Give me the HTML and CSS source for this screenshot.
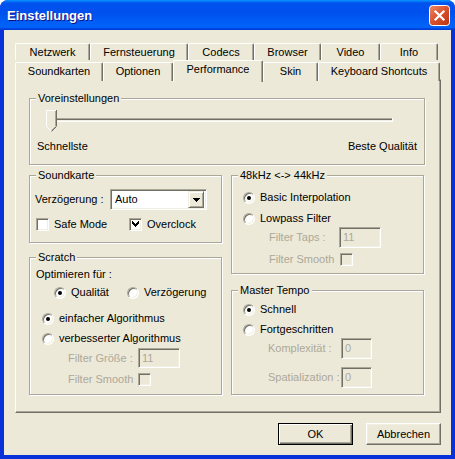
FILE: index.html
```html
<!DOCTYPE html>
<html lang="de">
<head>
    <meta charset="UTF-8">
    <title>Einstellungen</title>
    <link rel="stylesheet" href="styles.css">
</head>
<body>
    <div class="window">
        <div class="titlebar">
            <span class="title">Einstellungen</span>
            <button class="close" title="Schließen">
                <svg width="21" height="21" viewBox="0 0 21 21">
                    <defs>
                        <linearGradient id="close-bg" x1="0" y1="0" x2="1" y2="1">
                            <stop offset="0" stop-color="#ea8a6a"/>
                            <stop offset="0.5" stop-color="#d9512c"/>
                            <stop offset="1" stop-color="#b9330f"/>
                        </linearGradient>
                    </defs>
                    <rect x="0.5" y="0.5" width="20" height="20" rx="3" fill="url(#close-bg)" stroke="#fff"/>
                    <path d="M6.5 6.5L14.5 14.5M14.5 6.5L6.5 14.5" stroke="#fff" stroke-width="2.2" stroke-linecap="square"/>
                </svg>
            </button>
        </div>

        <div class="client">
            <div class="tabs">
                <div class="tab-row back">
                    <div class="tab">Netzwerk</div>
                    <div class="tab">Fernsteuerung</div>
                    <div class="tab">Codecs</div>
                    <div class="tab">Browser</div>
                    <div class="tab">Video</div>
                    <div class="tab">Info</div>
                </div>
                <div class="tab-row front">
                    <div class="tab">Soundkarten</div>
                    <div class="tab">Optionen</div>
                    <div class="tab selected">Performance</div>
                    <div class="tab">Skin</div>
                    <div class="tab">Keyboard Shortcuts</div>
                </div>
            </div>

            <div class="panel">
                <div class="group presets">
                    <div class="group-title">Voreinstellungen</div>
                    <svg class="slider" width="350" height="23" viewBox="0 0 350 23" shape-rendering="crispEdges">
                        <!-- channel -->
                        <rect x="4" y="8" width="344" height="1" fill="#aca899"/>
                        <rect x="5" y="9" width="342" height="1" fill="#716f64"/>
                        <rect x="5" y="10" width="342" height="1" fill="#f1efe2"/>
                        <rect x="4" y="11" width="344" height="1" fill="#fff"/>
                        <rect x="4" y="8" width="1" height="4" fill="#aca899"/>
                        <rect x="347" y="8" width="1" height="4" fill="#fff"/>
                        <!-- thumb -->
                        <polygon points="1,0 12,0 12,16 7,22 6,22 1,16" fill="#ece9d8" shape-rendering="auto"/>
                        <path d="M1.5 16V0.5H11" stroke="#fff" fill="none"/>
                        <path d="M1.5 16.5L6.5 21.5" stroke="#fff" fill="none" shape-rendering="auto"/>
                        <path d="M10.5 1V16" stroke="#aca899" fill="none"/>
                        <path d="M10.5 16.5L6.5 20.5" stroke="#aca899" fill="none" shape-rendering="auto"/>
                        <path d="M11.5 0V16" stroke="#716f64" fill="none"/>
                        <path d="M11.5 16.5L6.5 21.5" stroke="#716f64" fill="none" shape-rendering="auto"/>
                    </svg>
                    <div class="slider-labels">
                        <span>Schnellste</span>
                        <span>Beste Qualität</span>
                    </div>
                </div>

                <div class="columns">
                    <div class="col">
                        <div class="group soundcard">
                            <div class="group-title">Soundkarte</div>
                            <div class="row latency">
                                <span class="latency-label">Verzögerung :</span>
                                <div class="combo">
                                    <span class="combo-value">Auto</span>
                                    <span class="combo-button">
                                        <svg width="7" height="4" viewBox="0 0 7 4" shape-rendering="crispEdges">
                                            <path d="M0 0h7v1H0zM1 1h5v1H1zM2 2h3v1H2zM3 3h1v1H3z" fill="#000"/>
                                        </svg>
                                    </span>
                                </div>
                            </div>
                            <div class="row checks">
                                <label class="check safe-mode"><span class="box"></span>Safe Mode</label>
                                <label class="check"><span class="box checked">
                                    <svg width="7" height="7" viewBox="0 0 7 7" shape-rendering="crispEdges">
                                        <path d="M6 0h1v3H6zM5 1h1v3H5zM4 2h1v3H4zM3 3h1v3H3zM2 2h1v3H2zM1 1h1v3H1zM0 0h1v3H0z" fill="#000" transform="translate(0 0)"/>
                                    </svg>
                                </span>Overclock</label>
                            </div>
                        </div>

                        <div class="group scratch">
                            <div class="group-title">Scratch</div>
                            <div class="row optimize-label">Optimieren für :</div>
                            <div class="row optimize">
                                <label class="radio quality"><span class="dot on"></span>Qualität</label>
                                <label class="radio"><span class="dot"></span>Verzögerung</label>
                            </div>
                            <div class="row algo simple"><label class="radio"><span class="dot on"></span>einfacher Algorithmus</label></div>
                            <div class="row algo improved"><label class="radio"><span class="dot"></span>verbesserter Algorithmus</label></div>
                            <div class="row sub filter-size">
                                <span class="sub-label">Filter Größe :</span>
                                <span class="field wide">11</span>
                            </div>
                            <div class="row sub filter-smooth">
                                <span class="sub-label">Filter Smooth</span>
                                <span class="box disabled"></span>
                            </div>
                        </div>
                    </div>

                    <div class="col right">
                        <div class="group resample">
                            <div class="group-title">48kHz &lt;-&gt; 44kHz</div>
                            <div class="row opt first"><label class="radio"><span class="dot on"></span>Basic Interpolation</label></div>
                            <div class="row opt second"><label class="radio"><span class="dot"></span>Lowpass Filter</label></div>
                            <div class="row sub taps">
                                <span class="sub-label">Filter Taps :</span>
                                <span class="field wide">11</span>
                            </div>
                            <div class="row sub smooth">
                                <span class="sub-label">Filter Smooth</span>
                                <span class="box disabled"></span>
                            </div>
                        </div>

                        <div class="group tempo">
                            <div class="group-title">Master Tempo</div>
                            <div class="row opt first"><label class="radio"><span class="dot on"></span>Schnell</label></div>
                            <div class="row opt second"><label class="radio"><span class="dot"></span>Fortgeschritten</label></div>
                            <div class="row sub complexity">
                                <span class="sub-label">Komplexität :</span>
                                <span class="field narrow">0</span>
                            </div>
                            <div class="row sub spatial">
                                <span class="sub-label">Spatialization :</span>
                                <span class="field narrow">0</span>
                            </div>
                        </div>
                    </div>
                </div>
            </div>

            <div class="buttons">
                <button class="btn default">OK</button>
                <button class="btn">Abbrechen</button>
            </div>
        </div>
    </div>
</body>
</html>
```

FILE: styles.css
```css
* {
    box-sizing: border-box;
}
body {
    margin: 0;
    background: #fff;
    font-family: "Liberation Sans", Arial, sans-serif;
    font-size: 11px;
    line-height: 13px;
    color: #000;
}

/* Window frame */
.window {
    width: 455px;
    height: 459px;
    background: #0831d9;
    border-radius: 8px 8px 0 0;
    overflow: hidden;
    display: flex;
    flex-direction: column;
}
.titlebar {
    height: 30px;
    flex: none;
    display: flex;
    align-items: center;
    justify-content: space-between;
    padding: 1px 5px 0 7px;
    background: linear-gradient(180deg, #0997ff, #0053ee 10%, #0050ee 40%, #0062f7 85%, #0062f7 90%, #005bff 93%, #003dd7 96%, #003dd7);
}
.title {
    color: #fff;
    font-weight: bold;
    font-size: 13px;
    line-height: 15px;
    text-shadow: 1px 1px #0f1089;
}
.close {
    width: 21px;
    height: 21px;
    padding: 0;
    border: 0;
    background: none;
    display: block;
}
.close svg {
    display: block;
}
.client {
    flex: 1;
    margin: 0 4px 4px;
    background: #ece9d8;
    padding: 13px 10px 0 11px;
}

/* Tabs */
.tab-row {
    display: grid;
}
.tab-row.back {
    height: 17px;
    grid-template-columns: 75px 98px 66px 67px 59px 58px;
}
.tab-row.front {
    height: 19px;
    grid-template-columns: 88px 70px 90px 55px 122px;
    align-items: end;
}
.tab {
    background: #ece9d8;
    border-top: 1px solid #fff;
    border-left: 1px solid #fff;
    border-right: 1px solid #716f64;
    box-shadow: inset -1px 0 #aca899;
    border-radius: 2px 2px 0 0;
    text-align: center;
    padding-top: 2px;
    white-space: nowrap;
}
.back .tab {
    height: 17px;
}
.front .tab {
    height: 19px;
}
.front .tab.selected {
    position: relative;
    z-index: 1;
    height: 22px;
    margin-bottom: -1px;
}

/* Page panel */
.panel {
    height: 334px;
    border: 1px solid;
    border-color: #fff #716f64 #716f64 #fff;
    box-shadow: inset -1px -1px #aca899;
    padding: 18px 15px 0 13px;
}
.group {
    border: 1px solid #aca899;
    box-shadow: inset 1px 1px #fff, 1px 1px #fff;
}
.group-title {
    width: max-content;
    margin: -7px 0 0 6px;
    padding: 0 2px;
    background: #ece9d8;
}
.presets {
    height: 67px;
}
.slider {
    display: block;
    margin: 5px 0 0 15px;
}
.slider-labels {
    display: flex;
    justify-content: space-between;
    margin: 7px 7px 0 7px;
}
.columns {
    display: grid;
    grid-template-columns: 193px 193px;
    column-gap: 9px;
    margin-top: 10px;
}
.col {
    display: flex;
    flex-direction: column;
}
.soundcard {
    height: 68px;
}
.scratch {
    height: 138px;
    margin-top: 14px;
}
.resample {
    height: 99px;
}
.tempo {
    height: 105px;
    margin-top: 16px;
}

/* Rows inside the groups */
.row {
    display: flex;
    align-items: center;
    height: 13px;
}
.latency {
    height: 21px;
    margin: 7px 0 0 5px;
}
.latency-label {
    width: 75px;
}
.checks {
    margin: 8px 0 0 6px;
}
.safe-mode {
    width: 93px;
}
.optimize-label {
    margin: 4px 0 0 6px;
}
.optimize {
    margin: 5px 0 0 24px;
}
.quality {
    width: 73px;
}
.algo {
    margin-left: 12px;
}
.algo.simple {
    margin-top: 13px;
}
.algo.improved {
    margin-top: 7px;
}
.sub {
    color: #aca899;
}
.scratch .sub {
    margin-left: 38px;
}
.scratch .sub-label {
    width: 70px;
}
.filter-size {
    height: 20px;
    margin-top: 3px;
}
.filter-smooth {
    margin-top: 5px;
}
.opt {
    margin-left: 11px;
}
.resample .opt.first {
    margin-top: 9px;
}
.resample .opt.second {
    margin-top: 8px;
}
.resample .sub {
    margin-left: 37px;
}
.resample .sub-label {
    width: 70px;
}
.taps {
    height: 21px;
    margin-top: 2px;
}
.resample .smooth {
    margin-top: 5px;
}
.resample .smooth .box {
    margin-left: 1px;
}
.tempo .opt.first {
    margin-top: 6px;
}
.tempo .opt.second {
    margin-top: 7px;
}
.tempo .sub {
    margin-left: 36px;
    height: 21px;
}
.tempo .sub-label {
    width: 73px;
}
.complexity {
    margin-top: 2px;
}
.spatial {
    margin-top: 8px;
}

/* Classic controls */
.combo {
    width: 97px;
    height: 21px;
    display: flex;
    align-items: center;
    justify-content: space-between;
    background: #fff;
    border: 1px solid;
    border-color: #aca899 #fff #fff #aca899;
    box-shadow: inset 1px 1px #716f64, inset -1px -1px #f1efe2;
    padding: 2px 2px 2px 4px;
}
.combo-button {
    width: 16px;
    height: 17px;
    display: flex;
    align-items: center;
    justify-content: center;
    background: #ece9d8;
    border: 1px solid;
    border-color: #f1efe2 #716f64 #716f64 #f1efe2;
    box-shadow: inset 1px 1px #fff, inset -1px -1px #aca899;
}
.combo-button svg {
    display: block;
}
.check,
.radio {
    display: flex;
    align-items: center;
    white-space: nowrap;
}
.box {
    width: 13px;
    height: 13px;
    flex: none;
    display: flex;
    align-items: center;
    justify-content: center;
    background: #fff;
    border: 1px solid;
    border-color: #aca899 #fff #fff #aca899;
    box-shadow: inset 1px 1px #716f64, inset -1px -1px #f1efe2;
    margin-right: 5px;
}
.box svg {
    display: block;
}
.box.disabled {
    background: #ece9d8;
    margin-right: 0;
}
.dot {
    width: 12px;
    height: 12px;
    flex: none;
    border-radius: 50%;
    background: #fff;
    border: 1px solid;
    border-color: #aca899 #fff #fff #aca899;
    box-shadow: inset 1px 1px #716f64, inset -1px -1px #f1efe2;
    margin-right: 5px;
    display: flex;
    align-items: center;
    justify-content: center;
}
.dot.on::after {
    content: "";
    width: 4px;
    height: 4px;
    border-radius: 50%;
    background: #000;
}
.field {
    height: 21px;
    display: flex;
    align-items: center;
    background: #ece9d8;
    border: 1px solid;
    border-color: #aca899 #fff #fff #aca899;
    box-shadow: inset 1px 1px #716f64, inset -1px -1px #f1efe2;
    padding-left: 3px;
    color: #aca899;
}
.field.wide {
    width: 42px;
}
.field.narrow {
    width: 31px;
}
.filter-size .field {
    height: 20px;
}

/* Dialog buttons */
.buttons {
    display: flex;
    justify-content: flex-end;
    gap: 13px;
    margin-top: 10px;
}
.btn {
    width: 75px;
    height: 22px;
    padding: 0;
    font: inherit;
    color: #000;
    background: #ece9d8;
    border: 1px solid;
    border-color: #fff #716f64 #716f64 #fff;
    box-shadow: inset -1px -1px #aca899, inset 1px 1px #f1efe2;
}
.btn.default {
    border-color: #000;
    box-shadow: inset 1px 1px #fff, inset -1px -1px #716f64, inset -2px -2px #aca899;
}
```
